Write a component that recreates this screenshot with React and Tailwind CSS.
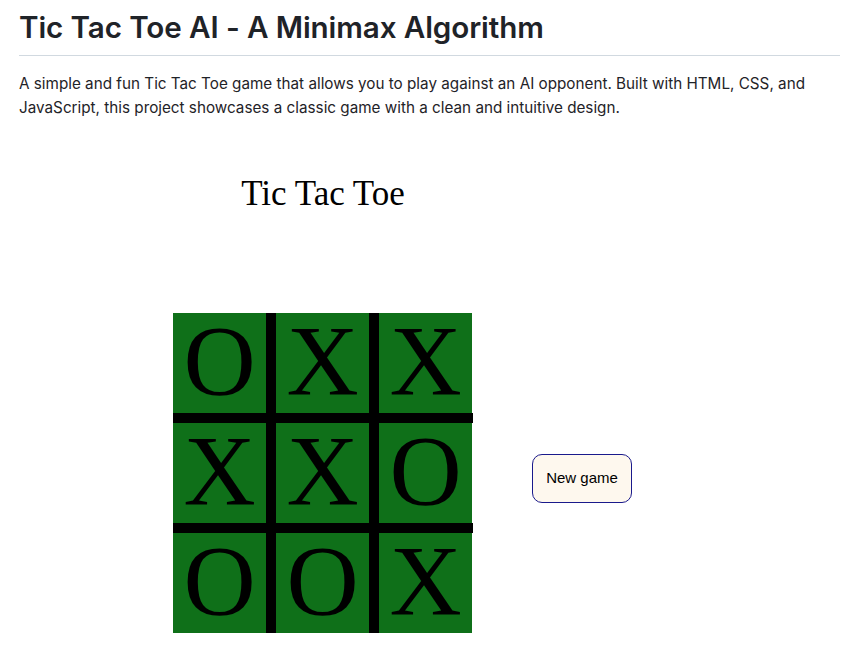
import React from "react";

const board = [
  ["O", "X", "X"],
  ["X", "X", "O"],
  ["O", "O", "X"],
];

function Row({ cells }) {
  return (
    <div className="flex h-[100px]">
      {cells.map((c, i) => (
        <React.Fragment key={i}>
          {i > 0 && <div className="w-[10px] bg-black" />}
          <div className="w-[93px] bg-[#0f7019] flex items-center justify-center pb-[5px] text-[100px] leading-none text-black" style={{ fontFamily: '"Liberation Serif", "Times New Roman", serif' }}>
            {c}
          </div>
        </React.Fragment>
      ))}
    </div>
  );
}

export default function App() {
  return (
    <div className="bg-white min-h-[646px] pl-[19px] pr-[1px] pt-[8px] text-[#1f2328]" style={{ fontFamily: 'Inter, "Noto Sans", sans-serif' }}>
      <h1 className="text-[29.6px] font-semibold leading-[38px] pb-[9px] border-b border-[#d1d9e0] tracking-[-0.1px]">
        Tic Tac Toe AI - A Minimax Algorithm
      </h1>
      <p className="mt-[16px] text-[15.25px] leading-[24px] pr-[20px]">
        A simple and fun Tic Tac Toe game that allows you to play against an AI opponent. Built with HTML, CSS, and JavaScript, this project showcases a classic game with a clean and intuitive design.
      </p>
      <div className="flex items-start ml-[154px] mt-[55px]">
        <div className="flex flex-col w-[300px]">
          <h2 className="text-[35px] leading-[37px] text-black text-center" style={{ fontFamily: '"Liberation Serif", "Times New Roman", serif' }}>
            Tic Tac Toe
          </h2>
          <div className="mt-[101px] flex flex-col">
            <Row cells={board[0]} />
            <div className="h-[10px] w-[300px] bg-black" />
            <Row cells={board[1]} />
            <div className="h-[10px] w-[300px] bg-black" />
            <Row cells={board[2]} />
          </div>
        </div>
        <button className="ml-[59px] mt-[279px] w-[100px] h-[49px] rounded-[10px] border border-[#1a1a8c] bg-[#fef8ee] text-[15px] text-black" style={{ fontFamily: '"Liberation Sans", Arial, sans-serif' }}>
          New game
        </button>
      </div>
    </div>
  );
}
